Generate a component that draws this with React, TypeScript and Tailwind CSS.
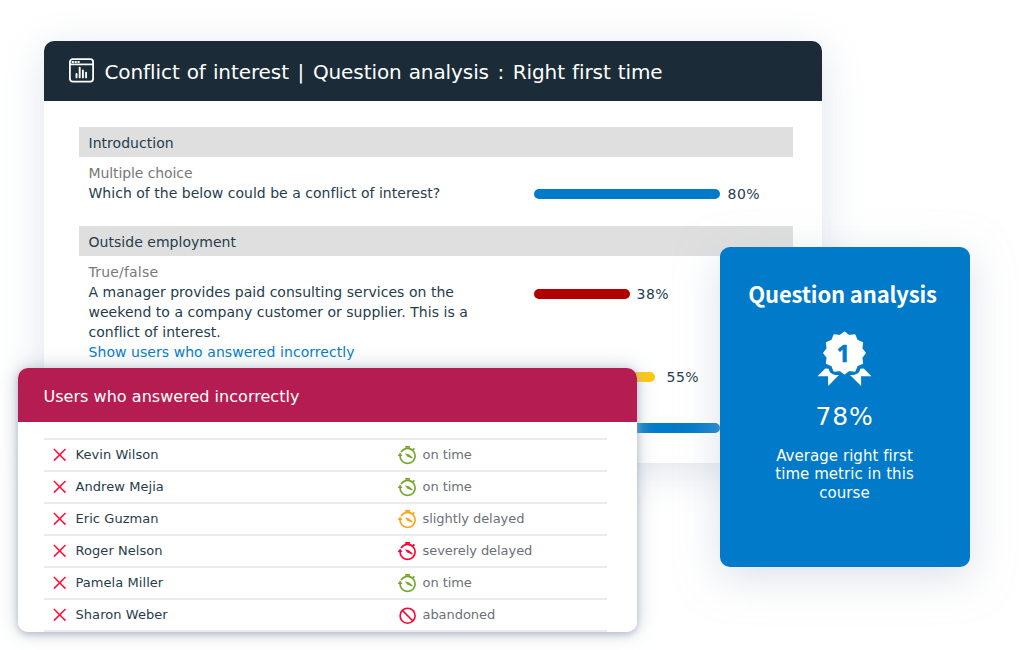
import React from 'react';

type Status = 'on time' | 'slightly delayed' | 'severely delayed' | 'abandoned';

const users: { name: string; status: Status }[] = [
  { name: 'Kevin Wilson', status: 'on time' },
  { name: 'Andrew Mejia', status: 'on time' },
  { name: 'Eric Guzman', status: 'slightly delayed' },
  { name: 'Roger Nelson', status: 'severely delayed' },
  { name: 'Pamela Miller', status: 'on time' },
  { name: 'Sharon Weber', status: 'abandoned' },
];

const statusColor: Record<Status, string> = {
  'on time': 'text-[#76a72b]',
  'slightly delayed': 'text-[#f9a51a]',
  'severely delayed': 'text-[#ff0032]',
  abandoned: 'text-[#ff0032]',
};

function ReportIcon() {
  return (
    <svg className="w-[26px] h-[26px] shrink-0" viewBox="0 0 26 26" fill="none" stroke="white">
      <rect x="0.9" y="1.2" width="23.2" height="22.4" rx="2.8" strokeWidth="1.8" />
      <path d="M1 6.4H24" strokeWidth="1.7" />
      <path d="M3.5 3.9h.6M6.4 3.9h.6M9.3 3.9h.6" strokeWidth="2" strokeLinecap="round" />
      <path d="M7.5 16v3.4M10.7 9.6v9.8M13.9 12.4v7M17.1 14.8v4.6" strokeWidth="1.9" strokeLinecap="round" />
    </svg>
  );
}

function TimerIcon() {
  return (
    <svg className="w-5 h-5" viewBox="0 0 20 20" fill="none" stroke="currentColor">
      <path d="M3.1 7.1A7.5 7.5 0 1 1 2.1 10.4" strokeWidth="1.6" />
      <path d="M7.2 1.9h4.8" strokeWidth="1.9" />
      <path d="M14.8 4.9l1.6-1.5" strokeWidth="1.9" />
      <path d="M-0.3 11L2.1 7.4L4.5 11Z" fill="currentColor" stroke="none" />
      <path d="M7 8.2l3.8 1.1l3.9 3.2l-.7 1.1l-4.8-2.2Z" fill="currentColor" stroke="none" />
    </svg>
  );
}

function BanIcon() {
  return (
    <svg className="w-5 h-5" viewBox="0 0 20 20" fill="none" stroke="currentColor" strokeWidth="1.6">
      <circle cx="9.6" cy="10.7" r="7.5" />
      <path d="M4.3 5.4l10.6 10.6" />
    </svg>
  );
}

function CrossIcon() {
  return (
    <svg className="w-3.5 h-3.5 text-[#ff0f3c]" viewBox="0 0 14 14" stroke="currentColor" strokeWidth="1.5">
      <path d="M0.9 1l11.6 11.6M12.5 1L0.9 12.6" />
    </svg>
  );
}

function AwardIcon() {
  // twelve rounded teeth round the seal
  const teeth = Array.from({ length: 24 }, (_, i) => {
    const r = i % 2 === 0 ? 20.5 : 17.6;
    const a = (i * Math.PI) / 12;
    return `${(27.5 + r * Math.sin(a)).toFixed(2)},${(22 - r * Math.cos(a)).toFixed(2)}`;
  }).join(' ');
  return (
    <svg className="w-[55px] h-[56px]" viewBox="0 0 55 56" fill="white">
      <path d="M8.3 37.6L11.8 37.8C12.2 42 16 44.7 22 44L11.1 55V45.2L0.5 45.2Z" />
      <path d="M46.7 37.6L43.2 37.8C42.8 42 39 44.7 33 44L44.1 55V45.2L54.5 45.2Z" />
      <polygon points={teeth} stroke="white" strokeWidth="1.8" strokeLinejoin="round" />
      <text
        x="26.3"
        y="31"
        textAnchor="middle"
        className="fill-[#007ac9] stroke-[#007ac9] stroke-[0.5px] text-[24px] font-bold font-['Noto_Sans','Open_Sans',sans-serif]"
      >
        1
      </text>
    </svg>
  );
}

function SectionHeading({ children }: { children: React.ReactNode }) {
  return (
    <div className="h-[30px] bg-[#dfdfdf] pl-2.5 text-[14px] leading-[32px] tracking-[0.03px]">{children}</div>
  );
}

function UsersPanel() {
  return (
    <div className="absolute left-[17.5px] top-[368px] w-[619.5px] h-[263.5px] rounded-[10px] shadow-[0_2px_6px_rgba(150,165,182,0.65),0_0_20px_rgba(175,188,200,0.7)]">
      <div className="h-full rounded-[10px] overflow-hidden bg-white">
        <div className="h-[53.5px] bg-[#b51d52] pl-[26px] text-white text-[16px] leading-[57px]">
          <span className="tracking-[0.03px]">Users who answered incorrectly</span>
        </div>
        <ul className="ml-[26px] mr-[30px] mt-4 border-t-2 border-[#ebebeb] text-[13px]">
          {users.map((user) => (
            <li key={user.name} className="h-8 border-b-2 border-[#ebebeb] flex items-center">
              <span className="w-8 pl-[9px]">
                <CrossIcon />
              </span>
              <span className="w-[322px] tracking-[0.06px]">{user.name}</span>
              <span className={statusColor[user.status]}>
                {user.status === 'abandoned' ? <BanIcon /> : <TimerIcon />}
              </span>
              <span className="ml-[5px] text-[#6c7077] tracking-[-0.06px]">{user.status}</span>
            </li>
          ))}
        </ul>
      </div>
    </div>
  );
}

function SummaryCard() {
  return (
    <div className="absolute left-[719.5px] top-[246.5px] w-[250px] h-[320px] rounded-[10px] bg-[#007ac9] text-white flex flex-col items-center shadow-[0_10px_40px_rgba(185,196,212,0.5)]">
      <h2 className="mt-[29px] mb-px pr-1 text-[22px] leading-[34px] tracking-[-0.15px] font-bold font-['Noto_Sans_CJK_SC','Open_Sans',sans-serif]">
        Question analysis
      </h2>
      <div className="mt-5">
        <AwardIcon />
      </div>
      <div className="mt-3 text-[25px] leading-9 tracking-[0.8px]">78%</div>
      <p className="mt-3 text-center text-[15px] leading-[18.5px] tracking-[0.05px]">
        Average right first
        <br />
        time metric in this
        <br />
        course
      </p>
    </div>
  );
}

export default function App() {
  return (
    <div className="relative w-[1028px] h-[650px] overflow-hidden bg-white text-[#263c4d] font-['DejaVu_Sans',sans-serif] whitespace-nowrap [font-variant-ligatures:none]">
      <div className="absolute left-[43.5px] top-[40.5px] w-[778.5px] h-[422px] rounded-t-[10px] bg-white shadow-[0_8px_40px_rgba(185,196,212,0.45)]">
        <header className="h-[60px] rounded-t-[10px] bg-[#1b2c38] pl-[25px] flex items-center text-white">
          <ReportIcon />
          <h1 className="ml-2.5 pt-0.5 text-[20px] leading-7 tracking-[-0.09px] [word-spacing:0.8px]">
            Conflict of interest <span className="mx-[1.6px]">|</span> Question analysis{' '}
            <span className="mx-[1.5px]">:</span> Right first time
          </h1>
        </header>
        <div className="mx-[35px] mr-[29px] pt-[26px] text-[14px] leading-5">
          <SectionHeading>Introduction</SectionHeading>
          <div className="h-[69px] pt-1.5 pl-2.5 flex">
            <div className="w-[445px]">
              <div className="text-[#77787b] tracking-[-0.1px]">Multiple choice</div>
              <div className="tracking-[0.02px]">Which of the below could be a conflict of interest?</div>
            </div>
            <div className="mt-[21px] h-5 flex items-center gap-2">
              <div className="w-[186px] h-2.5 rounded-full bg-[#007ac9]" />
              <span className="tracking-[0.5px]">80%</span>
            </div>
          </div>
          <SectionHeading>Outside employment</SectionHeading>
          <div className="pt-1.5 pl-2.5 flex">
            <div className="w-[445px]">
              <div className="text-[#77787b] tracking-[0.2px]">True/false</div>
              <p className="w-[400px] whitespace-normal tracking-[0.03px]">
                A manager provides paid consulting services on the weekend to a company customer or supplier. This is a
                conflict of interest.
              </p>
              <a className="text-[#007ac9] tracking-[0.06px]">Show users who answered incorrectly</a>
            </div>
            <div className="pt-[22px]">
              <div className="h-5 flex items-center gap-[7px]">
                <div className="w-24 h-2.5 rounded-full bg-[#b00000]" />
                <span className="tracking-[0.5px]">38%</span>
              </div>
              <div className="mt-[63px] h-5 flex items-center gap-3">
                <div className="w-[121px] h-2.5 rounded-full bg-[#ffc90a]" />
                <span className="tracking-[0.5px]">55%</span>
              </div>
              <div className="mt-[31px] h-5 flex items-center">
                <div className="w-[186px] h-2.5 rounded-full bg-[#007ac9]" />
              </div>
            </div>
          </div>
        </div>
      </div>
      <SummaryCard />
      <UsersPanel />
    </div>
  );
}
